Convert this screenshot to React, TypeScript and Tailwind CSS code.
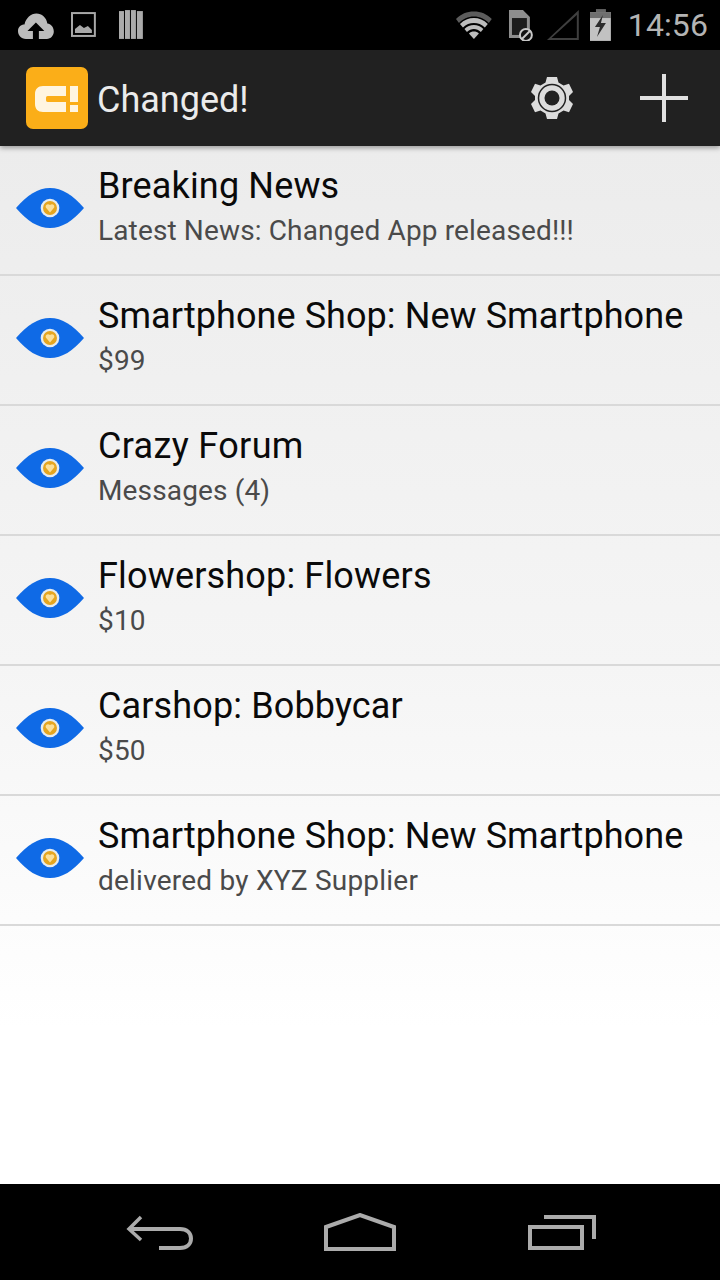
import React from "react";

const rows = [
  { title: "Breaking News", sub: "Latest News: Changed App released!!!", titleClass: "tracking-[0.15px]", subClass: "tracking-[0.14px]" },
  { title: "Smartphone Shop: New Smartphone", sub: "$99", titleClass: "tracking-[0.07px]", subClass: "tracking-[0.14px]" },
  { title: "Crazy Forum", sub: "Messages (4)", titleClass: "tracking-[0.34px]", subClass: "tracking-[0.14px]" },
  { title: "Flowershop: Flowers", sub: "$10", titleClass: "tracking-[0.17px]", subClass: "tracking-[0.14px]" },
  { title: "Carshop: Bobbycar", sub: "$50", titleClass: "tracking-[0.13px]", subClass: "tracking-[0.14px]" },
  { title: "Smartphone Shop: New Smartphone", sub: "delivered by XYZ Supplier", titleClass: "tracking-[0.07px]", subClass: "tracking-[0.22px]" },
];

function Eye() {
  return (
    <svg width="70" height="42" viewBox="0 0 70 42" className="shrink-0">
      <path d="M1 21 C12 8 23 1 35 1 C47 1 58 8 69 21 C58 34 47 41 35 41 C23 41 12 34 1 21 Z" fill="#0f6ae6" />
      <circle cx="35" cy="21" r="9.300" fill="#e6ecf0" />
      <circle cx="35" cy="21" r="7" fill="#e5a620" />
      <path d="M35 25.500 L30.800 20.500 C29.800 18 32.800 16 35 18 C37.200 16 40.200 18 39.200 20.500 Z" fill="#fbe09a" />
    </svg>
  );
}

function StatusBar() {
  return (
    <div className="flex h-[50px] items-center bg-black pl-[18px] pr-[12px]">
      <svg width="36" height="26" viewBox="0 0 36 26" className="mt-[2px]">
        <path d="M8 26 C3 26 0 22 0 18 C0 14 3 11.500 6.500 11.500 C8 5 13 0.500 18.500 0.500 C24 0.500 28.500 4.500 29.500 10.500 C33 11 36 14 36 18.500 C36 22.500 33 26 29 26 Z" fill="#bcbcbc" />
        <path d="M18 9.500 L26.500 18 L21 18 L21 26 L15 26 L15 18 L9.500 18 Z" fill="#000" />
      </svg>
      <svg width="26" height="26" viewBox="0 0 26 26" className="ml-[17px]">
        <rect x="1" y="1" width="23" height="23" fill="none" stroke="#a8a8a8" strokeWidth="2" />
        <path d="M4 21 L4 17 L9 13 L13 16 L17 14 L21 18 L21 21 Z" fill="#a8a8a8" />
      </svg>
      <svg width="26" height="30" viewBox="0 0 26 30" className="ml-[22px]">
        <g fill="#ababab">
          <rect x="0" y="1" width="5" height="28" />
          <rect x="6" y="0" width="5" height="29" />
          <rect x="12" y="0" width="5" height="29" />
          <rect x="18" y="1" width="6" height="28" />
        </g>
      </svg>
      <svg width="38" height="30" viewBox="0 0 38 30" className="ml-[310px]">
        <path d="M1 9 C6 4 12 1.500 19 1.500 C26 1.500 32 4 37 9 L34 13 C30 9 25 6.500 19 6.500 C13 6.500 8 9 4 13 Z" fill="#5c5c5c" />
        <path d="M5 14 C9 10 14 8 19 8 C24 8 29 10 33 14 L30 17.500 C27 14.500 23 13 19 13 C15 13 11 14.500 8 17.500 Z" fill="#bdbdbd" />
        <path d="M9.500 19 C12 16.500 15.500 15 19 15 C22.500 15 26 16.500 28.500 19 L26 22 C24 20 21.500 19 19 19 C16.500 19 14 20 12 22 Z" fill="#bdbdbd" />
        <path d="M14 23.500 C15.500 22 17 21.500 19 21.500 C21 21.500 22.500 22 24 23.500 L19 29 Z" fill="#bdbdbd" />
      </svg>
      <svg width="26" height="32" viewBox="0 0 26 32" className="ml-[16px]">
        <path d="M1 1 L15 1 L22 8 L22 29 L1 29 Z" fill="#8e8e8e" />
        <rect x="4" y="9" width="15" height="17" fill="#1c1c1c" />
        <circle cx="18" cy="26" r="6" fill="#111" stroke="#c8c8c8" strokeWidth="2" />
        <path d="M14 30 L22 22" stroke="#c8c8c8" strokeWidth="2" />
      </svg>
      <svg width="36" height="34" viewBox="0 0 36 34" className="ml-[11px]">
        <path d="M34 2 L34 32 L2 32 Z M32 7 L6.500 30 L32 30 Z" fill="#3f3f3f" fillRule="evenodd" />
      </svg>
      <svg width="22" height="32" viewBox="0 0 22 32" className="ml-[9px]">
        <rect x="6" y="0" width="10" height="3" fill="#666" />
        <rect x="0" y="3" width="21" height="29" fill="#c2c2c2" />
        <rect x="0" y="3" width="21" height="6" fill="#6f6f6f" />
        <path d="M13 6 L5 18 L10 18 L7 28 L16 14 L11 14 Z" fill="#2c2c2c" />
      </svg>
      <span className="ml-[16px] font-['Roboto',sans-serif] text-[32px] leading-none tracking-[0.1px] text-[#b4b4b4]">14:56</span>
    </div>
  );
}

function ActionBar() {
  return (
    <div className="relative z-10 flex h-[96px] items-center bg-[#212121] pl-[26px] shadow-[0_2px_5px_rgba(0,0,0,0.35)]">
      <div className="flex h-[62px] w-[62px] items-center justify-center rounded-[7px] bg-[#fbae18]">
        <svg width="44" height="26" viewBox="0 0 44 26" className="mt-[2px]">
          <path d="M8 0 L31 0 L31 10 L13 10 C11 10 11 11 11 13 C11 15 11 16 13 16 L31 16 L31 26 L8 26 C3 26 0 23 0 18 L0 8 C0 3 3 0 8 0 Z" fill="#fff5e0" />
          <rect x="35" y="0" width="8" height="16" fill="#fff5e0" />
          <rect x="35" y="19" width="8" height="7" fill="#fff5e0" />
        </svg>
      </div>
      <span className="ml-[9px] mt-[4px] font-['Roboto',sans-serif] text-[36px] leading-none text-[#ebebeb]">Changed!</span>
      <svg width="42" height="44" viewBox="0 0 42 44" className="ml-[282px]">
        <path
          d="M16 1 L26 1 L27.500 6.500 L32.500 9.500 L38 7.800 L42 16 L38 20 L38 24 L42 28 L38 36.200 L32.500 34.500 L27.500 37.500 L26 43 L16 43 L14.500 37.500 L9.500 34.500 L4 36.200 L0 28 L4 24 L4 20 L0 16 L4 7.800 L9.500 9.500 L14.500 6.500 Z"
          fill="#dcdcdc"
        />
        <circle cx="21" cy="22" r="13.500" fill="none" stroke="#212121" strokeWidth="1.500" />
        <circle cx="21" cy="22" r="7.500" fill="#212121" />
      </svg>
      <svg width="48" height="48" viewBox="0 0 48 48" className="ml-[67px]">
        <rect x="0" y="22" width="48" height="4" fill="#e0e0e0" />
        <rect x="22" y="0" width="4" height="48" fill="#e0e0e0" />
      </svg>
    </div>
  );
}

function NavBar() {
  return (
    <div className="flex h-[96px] items-center bg-black pl-[126px]">
      <svg width="68" height="38" viewBox="0 0 68 38" className="mt-[2px]">
        <path d="M15 3 L3 15 L15 26" fill="none" stroke="#ababab" strokeWidth="3.500" />
        <path d="M3 15 L54 15 C61 15 65 19 65 24.500 C65 30 61 34 54 34 L33 34" fill="none" stroke="#ababab" strokeWidth="4" />
      </svg>
      <svg width="72" height="38" viewBox="0 0 72 38" className="ml-[130px]">
        <path d="M2 14 L36 2 L70 14 L70 36 L2 36 Z" fill="none" stroke="#ababab" strokeWidth="4" />
      </svg>
      <svg width="68" height="38" viewBox="0 0 68 38" className="ml-[132px]">
        <rect x="2" y="14" width="52" height="21" fill="none" stroke="#ababab" strokeWidth="4" />
        <path d="M16 4 L66 4 L66 26" fill="none" stroke="#ababab" strokeWidth="4" />
      </svg>
    </div>
  );
}

export default function App() {
  return (
    <div className="flex h-[1280px] w-[720px] flex-col overflow-hidden bg-white font-['Roboto',sans-serif]">
      <StatusBar />
      <ActionBar />
      <div className="flex flex-1 flex-col bg-gradient-to-b from-[#ececec] via-[#f5f5f5] via-[50%] to-white to-[85%]">
        {rows.map((row, i) => (
          <div key={i} className="flex h-[130px] shrink-0 items-center border-b-2 border-[#d9d9d9] pl-[15px]">
            <div className="-mt-[4px] flex">
              <Eye />
            </div>
            <div className="ml-[13px] flex flex-col pb-[6px]">
              <span className={`text-[36px] leading-[46px] text-[#0a0a0a] ${row.titleClass}`}>{row.title}</span>
              <span className={`mt-[2px] text-[28px] leading-[40px] text-[#4a4a4a] ${row.subClass}`}>{row.sub}</span>
            </div>
          </div>
        ))}
      </div>
      <NavBar />
    </div>
  );
}
